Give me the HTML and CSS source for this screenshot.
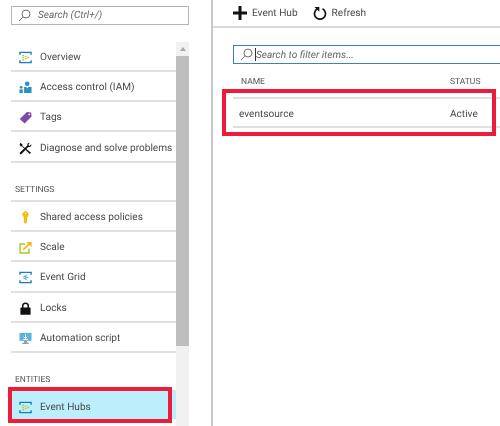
FILE: index.html
```html
<!DOCTYPE html>
<html>
<head>
  <meta charset="UTF-8">
  <title>Event Hubs</title>
  <link rel="stylesheet" href="styles.css">
</head>
<body>
  <div class="page">
    <div class="side">
      <div class="side-search">
        <svg class="glass" viewBox="0 0 14 14"><circle cx="8.6" cy="5.4" r="4.3"/><path d="M5.4 8.500L1 13"/></svg>
        <span>Search (Ctrl+/)</span>
      </div>
      <div class="menu-wrap">
        <div class="menu">
          <div class="row">
            <svg class="icon" viewBox="0 0 14 14"><path d="M1 4V1.500h12V4M1 10v2.500h12V10" fill="none" stroke="#1a7bc4" stroke-width="1.500"/><path d="M3.500 4h2v1.500h-2zM3.500 6.300h2v1.500h-2zM3.500 8.600h2v1.500h-2zM6.200 5h2v1.500h-2zM6.200 7.500h2V9h-2zM9 6.200h2v1.500H9z" fill="#b5cf3a"/></svg>
            <span>Overview</span>
          </div>
          <div class="row">
            <svg class="icon" viewBox="0 0 14 14"><circle cx="8.800" cy="3" r="2.500" fill="#2c8fc9"/><path d="M5.500 6.500h2.300l1 1.500 1-1.500H13.500V13H5.500z" fill="#2c8fc9"/><circle cx="2.300" cy="6.800" r="1.500" fill="#2c8fc9"/><path d="M.5 9h3.500v4H.5z" fill="#2c8fc9"/></svg>
            <span>Access control (IAM)</span>
          </div>
          <div class="row">
            <svg class="icon" viewBox="0 0 14 14"><path d="M8.500 1L13 1.500 13.500 6 6 13.500 .8 8.500z" fill="#7d4aa8"/><circle cx="11" cy="3.700" r=".9" fill="#fff"/></svg>
            <span>Tags</span>
          </div>
          <div class="row">
            <svg class="icon" viewBox="0 0 14 14"><path d="M1.500 .8L4 3l-.6 1L13 11.500 11.500 13 3 4.600l-1 .2L.6 2.600z" fill="#111"/><path d="M13.300 2.500l-2 1.700-1.300-1 1.500-2.400C9.800.6 8.500 2 9 3.800L1 11.300c-.6 1.400.4 2.400 1.700 1.700L10 5.400c2 .6 3.800-.9 3.300-2.900z" fill="#111"/></svg>
            <span>Diagnose and solve problems</span>
          </div>

          <div class="group">SETTINGS</div>
          <div class="row">
            <svg class="icon" viewBox="0 0 14 14"><path d="M7 .3a3.500 3.500 0 0 1 1.700 6.500V11l-.8.700.8.700L7 13.800l-1.700-1.400V6.800A3.500 3.500 0 0 1 7 .3z" fill="#f7bb0e"/><circle cx="7" cy="2.800" r=".8" fill="#fff2b8"/></svg>
            <span>Shared access policies</span>
          </div>
          <div class="row">
            <svg class="icon" viewBox="0 0 14 14"><path d="M6.500 3.200H1.200v9.600h9.600V8" fill="none" stroke="#a9c92a" stroke-width="1.600"/><path d="M4.500 9.500L12 2" stroke="#f5b50f" stroke-width="1.700"/><path d="M8 1h5.500v5.500z" fill="#f5b50f"/></svg>
            <span>Scale</span>
          </div>
          <div class="row">
            <svg class="icon" viewBox="0 0 14 14"><path d="M1 4V1.500h12V4M1 10v2.500h12V10" fill="none" stroke="#1a7bc4" stroke-width="1.500"/><path d="M9.500 3.500L3.500 6.500l5.500.5-5 .5 5.500 3-2-2.500 3.500-1-3.500-1z" fill="#5aa9dc"/></svg>
            <span>Event Grid</span>
          </div>
          <div class="row">
            <svg class="icon" viewBox="0 0 14 14"><path d="M4 6.500V4.300a3 3 0 0 1 6 0v2.200" fill="none" stroke="#111" stroke-width="1.600"/><rect x="1.500" y="6" width="11" height="7.800" rx="1" fill="#111"/></svg>
            <span>Locks</span>
          </div>
          <div class="row">
            <svg class="icon" viewBox="0 0 14 14"><rect x=".5" y="1" width="13" height="8.500" fill="#59b4d9"/><path d="M7 2.500v4M5 5l2 2 2-2M4.500 8h5" stroke="#fff" stroke-width="1" fill="none"/><path d="M5.500 9.500h3v2h-3zM3.500 11.500h7v1.500h-7z" fill="#8f9ca5"/></svg>
            <span>Automation script</span>
          </div>

          <div class="group">ENTITIES</div>
          <div class="row active">
            <svg class="icon" viewBox="0 0 14 14"><path d="M1 4V1.500h12V4M1 10v2.500h12V10" fill="none" stroke="#1a7bc4" stroke-width="1.500"/><path d="M3.500 4h2v1.500h-2zM3.500 6.300h2v1.500h-2zM3.500 8.600h2v1.500h-2zM6.200 5h2v1.500h-2zM6.200 7.500h2V9h-2zM9 6.200h2v1.500H9z" fill="#b5cf3a"/></svg>
            <span>Event Hubs</span>
          </div>
          <div class="mark mark-side"></div>
        </div>
        <div class="scrollbar">
          <div class="arrow"></div>
          <div class="thumb"></div>
        </div>
      </div>
    </div>

    <div class="main">
      <div class="toolbar">
        <div class="tool">
          <svg class="tool-icon" viewBox="0 0 14 14"><path d="M5.500 0h3v5.500H14v3H8.500V14h-3V8.500H0v-3h5.500z" fill="#111"/></svg>
          <span>Event Hub</span>
        </div>
        <div class="tool">
          <svg class="tool-icon" viewBox="0 0 14 14"><path d="M4.500 2.800a5.500 5.500 0 1 0 5 0" fill="none" stroke="#111" stroke-width="1.700"/><path d="M1.500 1h4.800v4.800z" fill="#111"/></svg>
          <span>Refresh</span>
        </div>
      </div>
      <div class="content">
        <div class="filter">
          <svg class="glass" viewBox="0 0 14 14"><circle cx="8.600" cy="5.400" r="4.300"/><path d="M5.400 8.500L1 13"/></svg>
          <i class="caret"></i>
          <span class="filter-text">Search to filter items...</span>
        </div>
        <div class="table-head">
          <span>NAME</span>
          <span class="status">STATUS</span>
        </div>
        <div class="table-row">
          <span>eventsource</span>
          <span class="status">Active</span>
        </div>
        <div class="mark mark-main"></div>
      </div>
    </div>
  </div>
</body>
</html>
```

FILE: styles.css
```css
html, body {
  margin: 0;
  height: 100%;
  overflow: hidden;
  background: #fff;
}

body {
  color: #4a4a4a;
  font-family: Roboto, "Open Sans", sans-serif;
  font-size: 10.1px;
  text-rendering: geometricPrecision;
}

.page {
  display: flex;
  width: 500px;
  height: 426px;
  filter: blur(0.3px);
}

.side {
  box-sizing: border-box;
  flex: none;
  width: 213px;
  padding: 6px 22px 0 11px;
  border-right: 2px solid #c8c8c8;
}

.side-search {
  box-sizing: border-box;
  display: flex;
  align-items: center;
  gap: 7px;
  height: 19px;
  padding-left: 6px;
  border: 1px solid #b4b4b4;
  font-style: italic;
  color: #666;
}

.glass {
  flex: none;
  width: 13px;
  height: 13px;
  fill: none;
  stroke: #666;
  stroke-width: 1;
}

.menu-wrap {
  display: flex;
  align-items: flex-start;
  margin-top: 17px;
}

.menu {
  position: relative;
  flex: none;
  width: 165px;
  margin-top: -0.5px;
}

.row {
  box-sizing: border-box;
  display: flex;
  align-items: center;
  gap: 8px;
  height: 30.3px;
  padding-left: 8px;
  padding-top: 3px;
  border-bottom: 2px solid #e0e0e0;
  white-space: nowrap;
}

.icon {
  flex: none;
  width: 13px;
  height: 13px;
}

.group {
  box-sizing: border-box;
  height: 39px;
  padding: 22px 0 0 4px;
  border-bottom: 2px solid #e0e0e0;
  font-size: 8.5px;
  color: #555;
}

.row + .group + .row.active {
  margin-top: -1px;
}

.row.active {
  height: 28px;
  padding-top: 4px;
  border-bottom: 0;
  background: #bdeefb;
}

.scrollbar {
  flex: none;
  width: 13px;
  height: 384px;
  background: #f1f1f1;
}

.arrow {
  width: 0;
  height: 0;
  margin: 0 auto;
  border: 3.5px solid transparent;
  border-top: 0;
  border-bottom: 4px solid #a8a8a8;
  position: relative;
  top: 5px;
}

.thumb {
  width: 13px;
  height: 290px;
  margin-top: 10px;
  background: #bebebe;
}

.mark {
  position: absolute;
  box-sizing: border-box;
  border: 4px solid #ee1c3c;
}

.mark-side {
  left: -3px;
  top: 345.5px;
  width: 164px;
  height: 36px;
}

.main {
  flex: 1;
  min-width: 0;
}

.toolbar {
  box-sizing: border-box;
  display: flex;
  gap: 15px;
  height: 28px;
  padding: 0 0 0 20px;
  align-items: center;
  border-bottom: 2px solid #d8d8d8;
}

.tool {
  display: flex;
  align-items: center;
  gap: 5px;
}

.tool-icon {
  width: 14px;
  height: 14px;
}

.content {
  position: relative;
  padding: 17px 0 0 20px;
}

.filter {
  box-sizing: border-box;
  display: flex;
  align-items: center;
  height: 19px;
  padding-left: 6px;
  border: 1px solid #3d7fc4;
  border-right: 0;
  font-style: italic;
  color: #666;
}

.filter-text {
  padding-top: 1px;
}

.caret {
  width: 1px;
  height: 13px;
  margin: 0 0 0 2px;
  background: #333;
}

.table-head {
  box-sizing: border-box;
  display: flex;
  justify-content: space-between;
  padding: 13px 23px 0 8px;
  height: 33px;
  font-size: 8.5px;
  color: #555;
}

.table-row {
  box-sizing: border-box;
  display: flex;
  justify-content: space-between;
  align-items: center;
  height: 31px;
  padding: 3px 23px 0 6px;
  border-top: 2px solid #e0e0e0;
  border-bottom: 2px solid #e0e0e0;
}

.status {
  width: 27px;
}

.mark-main {
  left: 9px;
  top: 61px;
  width: 274px;
  height: 47px;
}
```
